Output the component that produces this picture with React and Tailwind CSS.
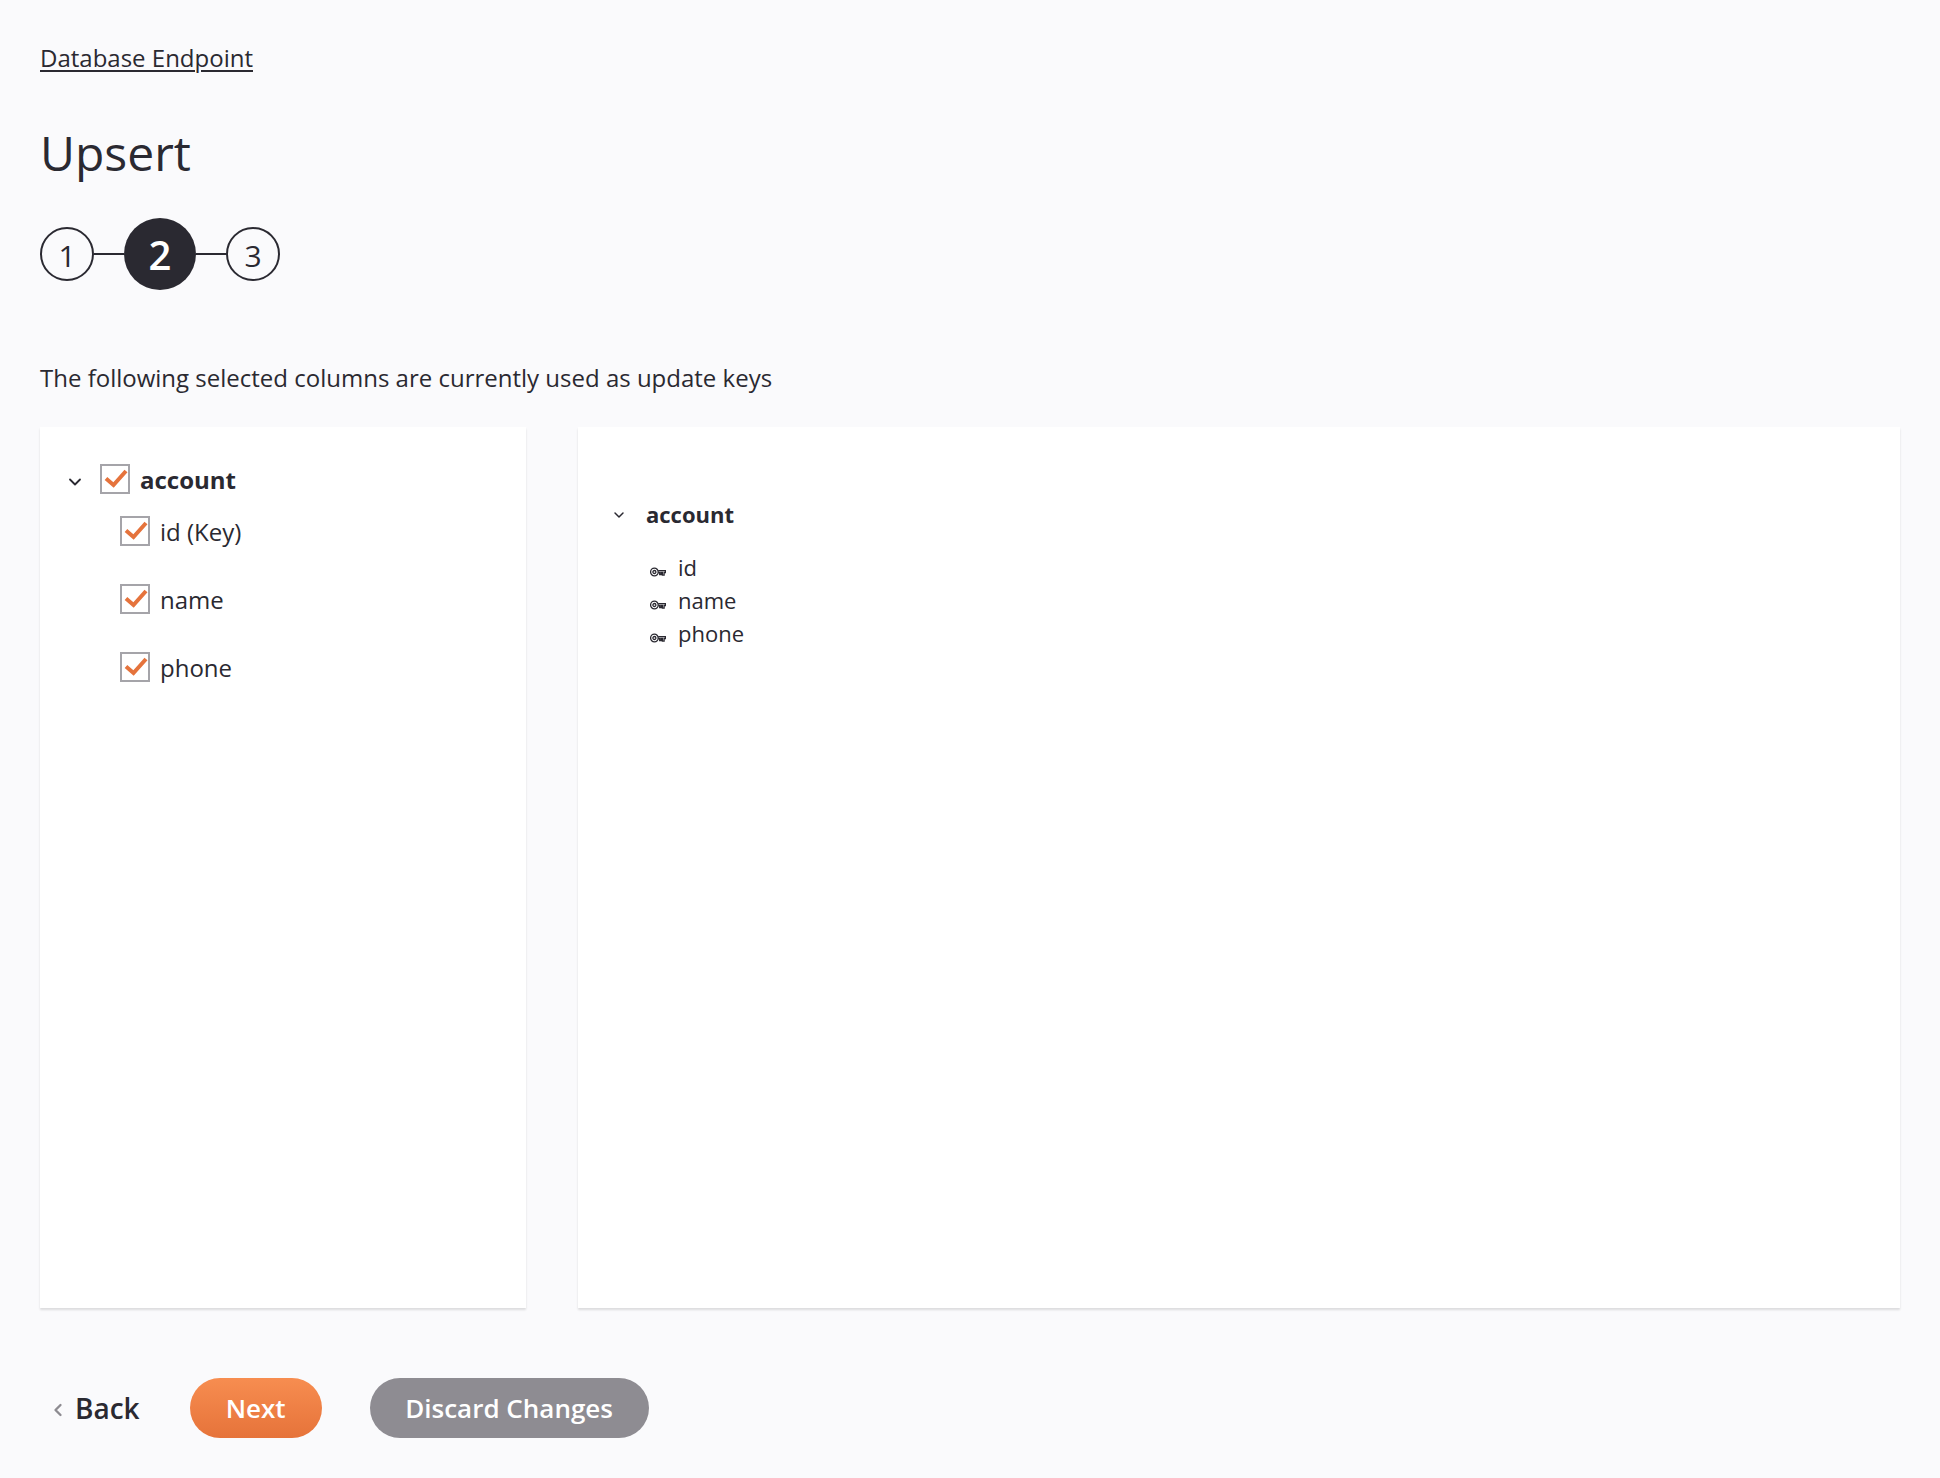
import { ChevronDown, ChevronLeft } from 'lucide-react';

const Check = () => (
  <span className="-mt-[2px] flex h-[30px] w-[30px] shrink-0 items-center justify-center border-2 border-[#a5a4a9] bg-white">
    <svg viewBox="2 2 26 26" className="h-[26px] w-[26px]" fill="none" stroke="#e5733c" strokeWidth="4">
      <path d="M6 14.5l7.5 6.5L26 7" />
    </svg>
  </span>
);

const KeyIcon = () => (
  <svg viewBox="0 0 16 10" className="h-[10px] w-[16px] shrink-0" fill="none" stroke="#2a2931" strokeWidth="1.3">
    <circle cx="4.4" cy="5" r="3.8" />
    <circle cx="4.4" cy="5" r="1.5" />
    <path d="M8.2 3.6h7.2v1.9h-1.3v2.7h-1.7V5.500h-1.3v2h-1.4v-2H8.200" />
  </svg>
);

const Step = ({ n, active }) => (
  <div
    className={
      active
        ? 'flex h-[72px] w-[72px] items-center justify-center rounded-full bg-[#2a2931] pt-[2px] text-[40px] font-semibold text-white'
        : 'flex h-[54px] w-[54px] items-center justify-center rounded-full border-2 border-[#2a2931] pt-[2px] text-[30px] font-medium text-[#2a2931]'
    }
  >
    {n}
  </div>
);

const columns = ['id (Key)', 'name', 'phone'];
const keys = ['id', 'name', 'phone'];

export default function App() {
  return (
    <div className="min-h-[1478px] bg-[#fafafc] px-[40px] pt-[40px] font-['Open_Sans',sans-serif] text-[#2a2931]">
      <a className="block text-[24px] leading-[36px] underline underline-offset-[3px] decoration-[2px]">Database Endpoint</a>

      <h1 className="mt-[45px] text-[48px] leading-[64px]">Upsert</h1>

      {/* Steps */}
      <div className="mt-[33px] flex items-center">
        <Step n={1} />
        <div className="h-[2px] w-[30px] bg-[#2a2931]" />
        <Step n={2} active />
        <div className="h-[2px] w-[30px] bg-[#2a2931]" />
        <Step n={3} />
      </div>

      <p className="mt-[70px] text-[24px] leading-[36px]">The following selected columns are currently used as update keys</p>

      <div className="mt-[31px] flex gap-[52px]">
        {/* Left tree */}
        <div className="h-[881px] w-[486px] bg-white pl-[25px] pt-[37px] shadow-[0_2px_2px_rgba(0,0,0,0.12)]">
          <div className="flex items-center">
            <ChevronDown className="mt-[4px] h-[20px] w-[20px]" strokeWidth={2.2} />
            <span className="ml-[15px] flex"><Check /></span>
            <span className="ml-[10px] text-[24px] font-bold leading-[32px]">account</span>
          </div>
          <div className="ml-[55px] mt-[14px]">
            {columns.map(col => (
              <div key={col} className="mb-[25px] flex h-[43px] items-center">
                <Check />
                <span className="ml-[10px] text-[24px]">{col}</span>
              </div>
            ))}
          </div>
        </div>

        {/* Right tree */}
        <div className="h-[881px] flex-1 bg-white pl-[33px] pt-[71px] shadow-[0_2px_2px_rgba(0,0,0,0.12)]">
          <div className="flex items-center">
            <ChevronDown className="mt-[1px] h-[16px] w-[16px]" strokeWidth={2.2} />
            <span className="ml-[19px] text-[22px] font-bold leading-[32px]">account</span>
          </div>
          <div className="ml-[39px] mt-[21px]">
            {keys.map(key => (
              <div key={key} className="flex h-[33px] items-center">
                <span className="mt-[8px]"><KeyIcon /></span>
                <span className="ml-[12px] text-[22px]">{key}</span>
              </div>
            ))}
          </div>
        </div>
      </div>

      {/* Footer buttons */}
      <div className="mt-[70px] flex items-center">
        <button className="flex items-center pl-[8px] text-[28px] font-semibold">
          <ChevronLeft className="mt-[3px] h-[22px] w-[20px] text-[#8d8b91]" strokeWidth={2.8} />
          <span className="ml-[7px]">Back</span>
        </button>
        <button className="ml-[50px] h-[60px] w-[132px] rounded-full bg-gradient-to-b from-[#f78d50] to-[#e6733a] text-[26px] font-semibold text-white">Next</button>
        <button className="ml-[48px] h-[60px] w-[279px] rounded-full bg-[#8e8c92] text-[26px] font-semibold text-white">Discard Changes</button>
      </div>
    </div>
  );
}
